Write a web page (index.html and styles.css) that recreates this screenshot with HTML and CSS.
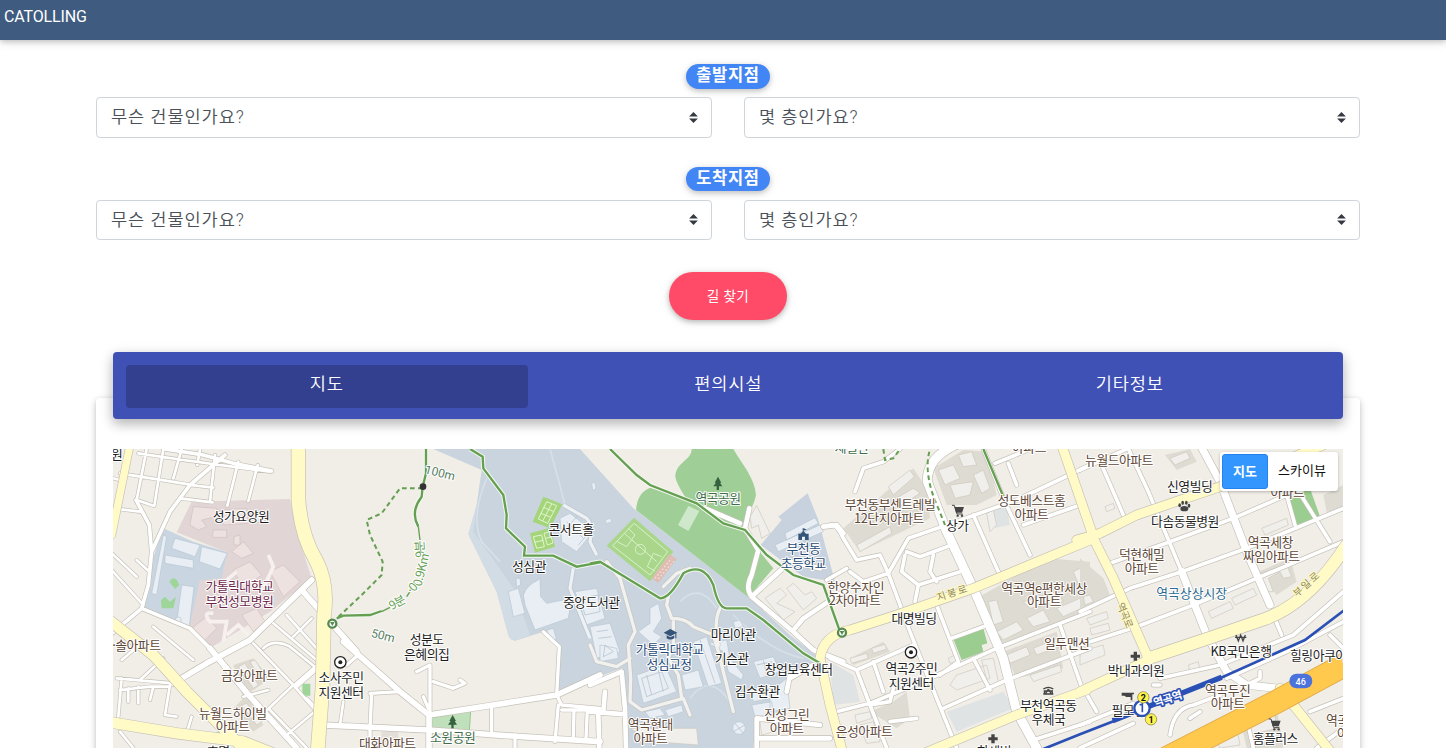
FILE: index.html
```html
<!DOCTYPE html>
<html lang="ko">
<head>
<meta charset="utf-8">
<title>CATOLLING</title>
<link rel="stylesheet" href="styles.css">
</head>
<body>
<header class="topbar">CATOLLING</header>
<main class="container">
  <section class="point">
    <span class="badge">출발지점</span>
    <div class="row">
      <div class="select"><span>무슨 건물인가요?</span><svg class="caret" viewBox="0 0 8 10"><path d="M4 0 8 4H0ZM0 6H8L4 10Z"/></svg></div>
      <div class="select"><span>몇 층인가요?</span><svg class="caret" viewBox="0 0 8 10"><path d="M4 0 8 4H0ZM0 6H8L4 10Z"/></svg></div>
    </div>
  </section>
  <section class="point">
    <span class="badge">도착지점</span>
    <div class="row">
      <div class="select"><span>무슨 건물인가요?</span><svg class="caret" viewBox="0 0 8 10"><path d="M4 0 8 4H0ZM0 6H8L4 10Z"/></svg></div>
      <div class="select"><span>몇 층인가요?</span><svg class="caret" viewBox="0 0 8 10"><path d="M4 0 8 4H0ZM0 6H8L4 10Z"/></svg></div>
    </div>
  </section>
  <button class="find">길 찾기</button>
  <nav class="tabs">
    <a class="tab active">지도</a>
    <a class="tab">편의시설</a>
    <a class="tab">기타정보</a>
  </nav>
  <section class="card">
    <div class="map">
      <svg class="map-svg" viewBox="113 449 1230 299" width="1230" height="299">
        <defs>
          <g id="minor">
            <g transform="translate(110 445) scale(.33333)">
              <path class="w10" d="M110 12 80 165 130 182M160 12 133 182M215 12 190 100M270 12 262 60M315 30 300 170M385 50 352 182M443 60 415 168M85 25 220 45 480 80M30 85 260 122M210 160 308 172M240 120 310 128M10 190 90 200M10 100 40 108M0 320 80 395M80 345 118 380M0 370 100 480"/>
              <path class="w14" d="M345 30 240 120 180 200 125 320 115 420 95 490 0 570M95 490 240 550 300 610M78 165 118 240 125 320M165 12 280 30 370 55 485 78"/>
              <path class="w20" d="M605 405 420 585 290 655 190 715M300 610 420 755 560 909M575 435 740 620M560 720 640 650"/>
              <path class="w10" d="M20 700 190 715M30 735 120 725 180 725M55 730V770M85 725V775M130 725 120 765M35 700 25 815M35 645 100 590M90 705 160 640M130 545 250 645M245 815 230 865M30 860 70 909M180 720 165 810 200 815M460 610Q490 580 540 605L620 670M530 510 620 610M490 535 620 645M430 595 550 720 620 800M550 575 605 520M480 795 590 909M550 720 450 815M620 795 530 870M400 755 475 735M660 840H750M690 840 700 770M440 775 500 840M590 760 620 790"/>
            </g>
            <g transform="translate(350 445) scale(.33333)">
              <path class="w20" d="M-20 590 150 740 237 810V909M237 810 400 785 620 750 750 690M-80 840 237 855 440 870 750 890"/>
              <path class="w12" d="M60 745 150 740M65 745 60 850M240 810V660L200 680M250 710 310 730 345 715 330 705M220 755 235 790M425 780V870M620 750 635 780 750 790M625 780 615 890M580 560 628 605 620 750M672 795 670 880M712 795 708 880M635 795H750M60 850V909M495 870V909M-10 660 25 630"/>
            </g>
            <g transform="translate(590 445) scale(.33333)">
              <path class="w12 campus" d="M50 350 90 400 135 560 115 600 122 700 120 770 155 795 280 760 300 810M235 455 230 480 245 520Q290 520 310 545L370 570 385 620 410 720 430 800M0 600 20 650 80 665 120 640M250 530 250 600 235 640 265 690 275 760M390 490Q370 530 385 600M220 425 260 385 300 370"/>
              <path class="w16" d="M0 720 95 680 105 790 108 909M0 800 105 808M40 800 45 740M25 810 28 909"/>
              <path class="w16" d="M478 190 465 250 505 315 485 390Q465 430 485 455L610 560 670 615 760 650M485 455 600 350 690 370M615 550 640 520 760 440M600 700 670 660M500 820 690 840M500 820V909M500 880H720M590 740 600 690M700 245 740 240 760 265M345 190 450 235"/>
            </g>
            <g transform="translate(830 445) scale(.33333)">
              <path class="w28" d="M400 -10Q290 30 292 110L350 260 430 430 520 640 560 800 620 909"/>
              <path class="w14" d="M75 140 100 70 160 50 210 12M0 240Q20 235 40 280L80 345 150 330 175 385 240 560 280 660 380 909M60 380 100 410 175 385 235 280 350 240 560 165 780 60M50 370 -10 405M230 320 270 335 365 300M225 330 215 380 265 420 255 470M310 330 300 380 320 410M265 420 390 380M430 210 505 380M460 12 520 160 600 330M495 55 600 12M535 55 560 120M580 240 750 180M320 480 385 650M365 580 460 545M80 675 250 600M0 640 80 675 120 780 170 909M0 805 120 775 300 700 500 610 780 500M330 690 385 650M340 790 530 705 780 610M430 640 480 735M690 540 760 740M520 640 555 790M120 780 180 770 190 730M180 830 260 820M560 810 610 885 780 830M130 650 160 740"/>
            </g>
            <g transform="translate(1080 445) scale(.33333)">
              <path class="w22" d="M350 -20 420 110 500 320 570 480M305 380 380 570 440 680 500 720 640 735"/>
              <path class="w14" d="M140 0 205 140 305 380M65 60 130 210M0 75 145 10M0 500 150 430 305 380 500 310 790 190M90 355 270 290 460 220 620 150M0 600 170 545 340 480 530 400 790 290M620 30 650 130 750 290M620 150 645 240M240 700 420 660 640 570 790 440M440 700 620 620 790 530M580 510 605 570M220 720 240 720M10 730 50 800M0 840 160 775M270 870Q280 790 340 780L420 750M0 909 160 835M500 720 540 700 540 680M750 570 790 610M640 740 620 770M500 820 520 909M690 800 790 760M330 820 360 800M710 909 790 850M640 -10 790 -40"/>
            </g>
          </g>
          <g id="major">
            <g transform="translate(110 445) scale(.33333)">
              <path class="w22" d="M60 0 5 270"/>
              <path class="w42" d="M565 0V160Q572 270 620 350 655 420 642 510L638 720 622 930"/>
              <path class="w32" d="M-10 520 130 630 230 740 420 930M-10 830 200 865 400 890 500 930"/>
            </g>
            <g transform="translate(830 445) scale(.33333)">
              <path class="w28" d="M-30 640Q-20 570 60 555L200 510 430 430 780 285M695 0 790 275M-30 640 0 780 40 930M270 930 560 810 770 735"/>
            </g>
            <g transform="translate(1080 445) scale(.33333)">
              <path class="w28" d="M-10 285 60 265 170 210 420 125 730 0M35 270 100 400 205 640M0 740 205 645M600 730 760 930"/>
              <path class="w36" d="M205 640 400 575 560 520Q690 470 800 300"/>
            </g>
          </g>
        </defs>

        <rect x="113" y="449" width="1230" height="299" fill="#f1eee8"/>

        <!-- districts and buildings -->
        <g transform="translate(110 445) scale(.33333)">
          <path fill="#e2d5d5" d="M245 170 540 162 560 260 605 400 480 500 300 610 235 550 270 400 335 390 350 322 200 262Z"/>
          <path fill="#c9d6e1" d="M160 250 250 290 352 322 335 400 270 405 238 550 95 490 125 350Z"/>
          <g class="pink-b"><path d="M250 185 320 190 318 215 275 225 290 245 265 255 240 240Z"/><path d="M310 255H350V277H307ZM330 195 410 190 415 235 340 240ZM415 210 465 200V230L420 235ZM372 275 390 270 390 300 372 300ZM365 320 400 290 430 325 395 340ZM370 375 420 350 455 390 400 430ZM480 380 520 360 570 410 520 455ZM395 510 440 490 465 530 430 560ZM245 550 290 515 320 550 280 590Z"/></g>
          <g class="blue-b"><path d="M195 280 270 300 255 335 185 310ZM275 305 352 325 330 372 268 350ZM160 270 170 275 140 450 125 445ZM165 330 250 345 250 370 165 355ZM215 420 252 425 238 545 200 535Z"/><circle cx="205" cy="525" r="9"/></g>
          <path fill="#9ed69a" d="M178 410Q195 385 208 420L195 432ZM153 465 165 455 180 470 198 455 190 490 155 490ZM577 716H601V752H577ZM315 865Q330 850 350 882L315 875Z"/>
          <path fill="none" stroke="#f6f0ee" stroke-width="11" d="M310 505Q275 500 300 530L350 530 340 590M350 570 385 540 420 575M380 380 310 440M475 330 490 365 455 440"/>
          <path fill="#dedad0" d="M370 660 430 640 480 700 410 750 460 840 430 860 370 790 400 760Z"/><path class="grey-b" d="M385 665 405 655 445 720 430 730ZM420 650 435 645 470 700 455 710ZM395 780 410 775 455 830 440 840Z"/>
        </g>
        <g transform="translate(590 445) scale(.33333)">
          <path fill="#c9d4de" d="M-470 12-325 75-340 180-365 268-280 440-245 570Q-240 585-225 587L-140 560-92 605-95 745 0 705 95 670 110 909H490L500 815 590 800 600 695 690 640 600 570 480 460 130 190-30 12Z"/>
          <path fill="#d2dce5" d="M-325 75-340 180-365 268-280 440-245 570Q-240 585-225 587L-180 570-230 430-300 330-350 260Z"/>
          <path fill="#c7d2de" d="M512 300 575 225 565 215 653 145 685 225 735 410 640 395Z"/>
          <path fill="#9fcf96" d="M305 12H430C455 55 495 100 498 150 490 190 470 205 468 245L505 315 550 370 475 457 138 195C142 155 155 140 180 128L290 162Q255 110 256 90C262 50 305 45 305 12Z"/>
          <path fill="#cfe8cb" d="M295 183 328 198 295 258 264 240Z"/>
          <path fill="none" stroke="#d6e0e8" stroke-width="5" d="M-120 12Q-90 120-75 180M-310 100Q-360 220-325 290L-270 350M270 470Q330 410 380 490M430 510Q540 620 640 640M300 760Q360 680 420 770"/>
          <g class="blue-b">
            <path d="M-200 450Q-190 420-155 405L-150 398-148 455-130 475-55 460-65 520-165 555-195 480ZM-245 440-215 430-195 505-230 515ZM-222 400-210 400-208 420-220 425ZM-90 220-60 205 10 260-40 320-85 290ZM-45 440 20 430 45 520-10 540ZM-130 555-110 550-100 585-120 580ZM0 545 60 535 90 620 20 640ZM180 490 205 475 215 520 190 560 215 575 190 600 145 560 180 535ZM310 590 350 575 395 715 355 725ZM355 595 410 585 420 640 460 690 455 705 415 680 400 620ZM275 690 325 675 340 725 285 735ZM140 690 225 660 260 740 160 775ZM490 650 550 635 570 680 510 700ZM480 735 540 715 545 760 490 770ZM540 740 590 700 600 790 540 800ZM485 780 545 770 550 810 495 815ZM165 800 210 790 225 810 180 820ZM225 795 275 780 280 800 235 815ZM430 530 450 525 460 545 435 550Z"/>
            <path d="M585 265 675 218 685 235 590 285ZM555 300 690 240 700 260 565 320Z"/>
            <circle cx="447" cy="849" r="19"/><path d="M45 225 62 220 65 230 50 236ZM5 115 15 112 18 130 8 137Z"/>
            <path d="M30 600 80 610 85 640 30 650Z"/>
          </g>
          <path fill="none" stroke="#aebbc8" stroke-width="2" d="M-70 230-20 280M-75 255-40 215M-55 270-15 245M-35 300-5 265M-30 460 25 450 30 500-15 510ZM20 560 55 555M25 580 65 575M45 600 70 620 40 635ZM155 700 215 680 235 730 170 755ZM170 690 185 750M205 675 220 740M330 585 375 715M500 660 545 650 555 680M520 645 530 690M490 740 540 730M435 835 460 865M430 860 465 840"/>
          <!-- stadium and courts -->
          <path fill="#a9d68b" d="M132 218 250 320 180 409 50 302Z"/>
          <path fill="#dfbdb4" d="M238 328 260 342 205 414 185 400Z"/>
          <g fill="none" stroke="#d9f1c9" stroke-width="3"><path d="M132 235 233 320 180 390 68 302ZM103 265 200 350M115 250 135 270 110 305 82 290M215 335 190 325 172 365 195 378"/><circle cx="151" cy="313" r="15"/></g>
          <path fill="none" stroke="#f3dfd9" stroke-width="4" stroke-dasharray="5 6" d="M195 400 245 340M205 402 252 348"/>
          <path fill="#a5d57b" d="M-140 155-83 178-120 250-172 230ZM-180 265-118 248-105 305-165 323Z"/>
          <path fill="none" stroke="#e1f4cc" stroke-width="3" d="M-130 170-100 182-127 235-155 222ZM-140 187-108 200M-148 205-117 217M-115 177-142 228M-170 275-145 270-137 305-160 310ZM-138 265-120 260-111 294-128 300ZM-168 292-140 286M-134 280-114 276"/>
          <path fill="none" stroke="#b9c4ce" stroke-width="14" d="M-80 180-10 220Q10 240 0 290L20 330M-50 370-60 430 0 580"/>
          <path fill="none" stroke="#edf1f4" stroke-width="10" d="M-80 180-10 220Q10 240 0 290L20 330M-50 370-60 430 0 580"/>
          <path class="grey-b" d="M480 215 500 182 540 265 515 280 505 240 485 250ZM525 460 570 430 590 450 560 475 615 500 580 525ZM590 430 610 415 645 450 665 440 680 460 640 495ZM510 830 580 820 590 850 515 870ZM120 850 320 850 325 900 190 890Z"/>
        </g>
        <g transform="translate(350 445) scale(.33333)">
          <path fill="#bfe0bb" stroke="#96c795" stroke-width="3" d="M245 818 362 797 358 860 243 855Z"/>
          <path fill="#e3dfd8" d="M95 860 145 855 145 909H90Z"/>
        </g>
        <g transform="translate(830 445) scale(.33333)">
          <path fill="#dedbd2" d="M310 70 400 15 470 20 500 150 440 180 350 180ZM40 250 250 70 290 130 300 220 90 320ZM440 460 650 340 780 350 780 500 500 610ZM520 620 680 560 700 670 560 700ZM60 640 160 590 180 620 70 660ZM120 800 190 770 230 740 240 820 200 850Z"/>
          <path fill="#e0e3e4" d="M475 190 530 180 540 240 490 250ZM350 800 520 740 550 790 380 860ZM0 650 70 690 90 770 10 780Z"/>
          <g class="grey-b"><path d="M325 75 370 60 390 100 345 120ZM385 30 425 20 440 60 400 65ZM430 90 460 75 480 130 455 145ZM360 120 430 110 420 150 375 160ZM175 125 240 75 253 95 190 150ZM190 165 250 130 270 145 215 180ZM80 300 180 245 185 265 90 320ZM470 205 490 195 500 240 480 260ZM475 470 500 465 520 530 490 540ZM500 560 560 530 580 555 520 585ZM590 520 640 495 660 530 610 545ZM680 490 750 460 775 480 700 515ZM580 470 680 440 700 470 600 490ZM730 380 750 370 775 430 755 440ZM530 630 590 605 600 630 540 655ZM610 610 680 580 690 605 620 630ZM600 690 690 660 695 680 610 710ZM360 720 380 690 470 660 480 700 380 735ZM455 645 490 640 505 710 475 725ZM60 640 110 625 115 640 65 655ZM125 610 165 598 170 612 130 625ZM75 810 120 800 125 820 80 835ZM90 840 130 830 135 850 100 860ZM100 870 145 860 150 890 110 895ZM355 640 375 630 380 650 360 655Z"/></g>
          <path fill="#9bcc90" d="M370 582 460 550 472 595 455 600 460 620 395 645Z"/>
        </g>
        <g transform="translate(1080 445) scale(.33333)">
          <path fill="#dedbd2" d="M255 30 330 12 350 50 290 75ZM535 380 630 340 650 410 590 450ZM0 340 70 400 90 450 0 500ZM730 150 790 120V200L740 200ZM480 820 590 790 610 909H500Z"/>
          <g class="grey-b"><path d="M270 40 320 20 330 40 285 60ZM540 385 620 360 635 395 610 400 600 380 565 400 580 440 560 440ZM385 500 450 470 460 490 395 520ZM455 460 520 430 530 450 465 480ZM545 250 620 220 625 240 555 270ZM75 185 100 175 105 190 80 200ZM20 520 80 500 85 520 30 540ZM30 550 85 535 90 555 35 570ZM0 620 70 600 75 630 0 660ZM325 660 355 650 360 675 330 685ZM490 800 580 780 590 850 510 870ZM10 455 30 450 40 470 15 480ZM400 870 470 850 480 900 420 909Z"/></g>
          <path fill="#9bcc90" d="M620 160 690 130 720 215 650 242Z"/>
        </g>

        <use href="#minor" class="casing"/>
        <use href="#minor" class="road"/>
        <use href="#major" class="casing"/>
        <use href="#major" class="avenue"/>

        <!-- highway and railway -->
        <g transform="translate(1080 445) scale(.33333)" fill="none">
          <path stroke="#e0a94a" stroke-width="72" d="M210 965 590 770 830 640"/>
          <path stroke="#ffc94e" stroke-width="67" d="M210 965 590 770 830 640"/>
          <path stroke="#2b50b5" stroke-width="8" d="M-130 920 0 868 110 825 420 700 675 585 800 490"/>
          <path stroke="#2b50b5" stroke-width="16" d="M98 827 425 697"/>
        </g>

        <!-- walking trails -->
        <g class="trail-halo" transform="translate(350 445) scale(.33333)"><path d="M228 0V85L218 125 215 155Q180 200 205 245M360 12 398 35 400 70 460 150 470 210 468 250 525 305 522 332 610 332 680 365 750 352M-40 520-20 512 60 510 95 498M780 12 860 90 900 120 1040 175 1120 235 1185 255 1250 330 1330 390 1420 420 1470 560M720 355 750 350 930 460Q960 460 1000 385 1060 350 1090 420 1105 490 1130 490H1190L1240 525 1360 625 1410 655"/></g>
        <g class="trail" transform="translate(350 445) scale(.33333)"><path d="M228 0V85L218 125 215 155Q180 200 205 245M360 12 398 35 400 70 460 150 470 210 468 250 525 305 522 332 610 332 680 365 750 352M-40 520-20 512 60 510 95 498M780 12 860 90 900 120 1040 175 1120 235 1185 255 1250 330 1330 390 1420 420 1470 560M720 355 750 350 930 460Q960 460 1000 385 1060 350 1090 420 1105 490 1130 490H1190L1240 525 1360 625 1410 655M1900 12 1960 155"/>
          <path stroke-width="6" stroke-dasharray="14 10" d="M218 130 150 130 95 205 50 225 60 270 98 350 95 390 30 455-40 520M1738 20Q1720 90 1765 190L1785 240M1600 12 1605 45 1630 40 1650 12"/>
          <path stroke-width="4" d="M205 245 210 285M95 500 120 487M180 440 170 455"/>
          <circle cx="219" cy="125" r="10" fill="#333" stroke="none"/>
          <g fill="#fff" stroke="#578a50" stroke-width="7"><circle cx="-53" cy="536" r="12"/><circle cx="1476" cy="563" r="12"/></g>
          <path fill="#578a50" stroke="none" d="M-60 531H-46L-53 543ZM1469 558H1483L1476 570Z"/>
        </g>

        <g class="labels" transform="translate(110 445) scale(.33333)">
          <text class="dark" x="20" y="42">원</text><text class="dark" x="393" y="227">성가요양원</text>
          <text class="hosp" x="388" y="438">가톨릭대학교</text><text class="hosp" x="388" y="482">부천성모병원</text>
          <text x="79" y="615">·솔아파트</text><text x="418" y="705">금강아파트</text>
          <text x="368" y="818">뉴월드하이빌</text><text x="368" y="859">아파트</text>
          <text class="dark" x="693" y="712">소사주민</text><text class="dark" x="693" y="756">지원센터</text>
          <text class="dark" x="325" y="932">호명</text>
        </g>
        <g class="labels" transform="translate(350 445) scale(.33333)">
          <text class="dist" x="270" y="96" transform="rotate(14 270 84)">100m</text><text class="dist" x="99" y="584" transform="rotate(14 99 572)">50m</text>
          <text class="walk" transform="translate(222 312) rotate(-94)">9분</text><text class="walk" transform="translate(226 378) rotate(-76)">0.9Km</text><text class="walk" transform="translate(196 438) rotate(-50)">·0</text><text class="walk" transform="translate(147 484) rotate(-28)">9분</text>
          <text class="dark" x="230" y="598">성분도</text><text class="dark" x="230" y="641">은혜의집</text>
          <text class="park" x="308" y="892">소원공원</text><text x="112" y="909">대화아파트</text>
          <text class="dark" x="663" y="268">콘서트홀</text><text class="dark" x="537" y="378">성심관</text><text class="dark" x="724" y="487">중앙도서관</text>
        </g>
        <g class="labels" transform="translate(590 445) scale(.33333)">
          <text class="park" x="384" y="174">역곡공원</text>
          <text class="school" x="640" y="324">부천동</text><text class="school" x="640" y="368">초등학교</text>
          <text class="school" x="239" y="628">가톨릭대학교</text><text class="school" x="237" y="673">성심교정</text>
          <text class="dark" x="430" y="582">마리아관</text><text class="dark" x="425" y="653">기슨관</text>
          <text class="dark" x="626" y="686">창업보육센터</text><text class="dark" x="502" y="753">김수환관</text>
          <text x="590" y="821">진성그린</text><text x="590" y="863">아파트</text>
          <text x="181" y="853">역곡현대</text><text x="181" y="895">아파트</text>
        </g>
        <g class="labels" transform="translate(830 445) scale(.33333)">
          <text class="park" x="65" y="20">제빌란</text><text x="597" y="20">아파트</text>
          <text x="180" y="193">부천동부센트레빌</text><text x="177" y="233">12단지아파트</text>
          <text class="dark" x="382" y="256">상가</text>
          <text x="604" y="180">성도베스트홈</text><text x="604" y="223">아파트</text>
          <text x="77" y="441">한양수자인</text><text x="74" y="481">2차아파트</text>
          <text class="street" x="365" y="455" transform="rotate(-18 365 445)">지 봉 로</text>
          <text class="dark" x="252" y="535">대명빌딩</text>
          <text x="642" y="444">역곡역e편한세상</text><text x="642" y="483">아파트</text>
          <text x="710" y="610">일두맨션</text>
          <text class="dark" x="244" y="684">역곡2주민</text><text class="dark" x="244" y="728">지원센터</text>
          <text class="dark" x="655" y="796">부천역곡동</text><text class="dark" x="655" y="838">우체국</text>
          <text x="102" y="873">은성아파트</text><text class="dark" x="492" y="932">한세빌</text>
        </g>
        <g class="labels" transform="translate(1080 445) scale(.33333)">
          <text x="117" y="60">뉴월드아파트</text><text class="dark" x="329" y="137">신영빌딩</text>
          <text class="dark" x="315" y="242">다솜동물병원</text><text x="622" y="157">아파트</text>
          <text x="571" y="307">역곡세창</text><text x="574" y="347">짜임아파트</text>
          <text x="185" y="341">덕현해밀</text><text x="185" y="384">아파트</text>
          <text class="market" x="335" y="458">역곡상상시장</text>
          <text class="street" x="136" y="522" transform="rotate(68 136 510)">역곡로</text><text class="street" x="677" y="430" transform="rotate(-42 677 418)">부 일 로</text>
          <text class="dark" x="483" y="632">KB국민은행</text><text class="dark" x="715" y="645">힐링아쿠아</text>
          <text class="dark" x="168" y="690">박내과의원</text><text class="dark" x="145" y="811">필모텔</text>
          <text x="443" y="749">역곡두진</text><text x="443" y="788">아파트</text>
          <text class="dark" x="586" y="893">홈플러스</text><text x="772" y="840">역곡</text><text x="788" y="880">아</text>
          <text class="station" x="262" y="773" transform="rotate(-17 262 760)">역곡역</text>
        </g>

        <!-- markers -->
        <g transform="translate(110 445) scale(.33333)"><g id="office"><circle cx="691" cy="652" r="17" fill="#fff" stroke="#222" stroke-width="4"/><circle cx="691" cy="652" r="6" fill="#222"/></g></g>
        <g transform="translate(830 445) scale(.33333)" fill="#444">
          <use href="#office" x="-448" y="-30"/>
          <g id="cart"><path d="M373 186H402L396 203H378Z"/><path fill="none" stroke="#444" stroke-width="3" d="M366 181H373L381 207H398"/><circle cx="383" cy="212" r="3.5"/><circle cx="396" cy="212" r="3.5"/></g>
          <path d="M484 868H494V877H503V886H494V895H484V886H475V877H484Z"/>
          <path fill="none" stroke="#444" stroke-width="4" d="M640 732Q655 722 670 732M641 738H669M640 747H670M645 738 642 747M665 738 668 747M655 732 646 747M655 732 664 747"/>
        </g>
        <g transform="translate(350 445) scale(.33333)" fill="#36623f"><path id="tree" d="M308 810 318 828H314L321 839H311V850H304V839H294L302 828H298Z"/></g>
        <g transform="translate(590 445) scale(.33333)">
          <use href="#tree" x="76" y="-715" fill="#36623f"/>
          <g fill="#34547a"><path d="M625 266H632L640 258 648 266H656V285H645V275H636V285H625ZM638 250H640V262H638ZM640 250 650 253 640 257Z"/><path d="M221 563 241 552 262 563 241 574ZM230 571 241 577 253 571V580Q241 587 230 580ZM256 567V580H259V565Z"/></g>
        </g>
        <g transform="translate(1080 445) scale(.33333)" fill="#444">
          <ellipse cx="313" cy="191" rx="12" ry="8"/><ellipse cx="299" cy="181" rx="4" ry="6"/><ellipse cx="308" cy="173" rx="4" ry="6"/><ellipse cx="319" cy="173" rx="4" ry="6"/><ellipse cx="327" cy="182" rx="4" ry="6"/>
          <path d="M161 620H171V629H180V638H171V647H161V638H152V629H161ZM125 743H162V748H157V766H152V756H139L133 752H125Z"/>
          <path fill="none" stroke="#444" stroke-width="4" d="M468 570 475 588 482 570 489 588 496 570M465 577H499"/>
          <use href="#cart" x="200" y="641"/>
          <rect x="628" y="686" width="69" height="44" rx="22" fill="#4c72dc"/><text class="num" x="662" y="719" fill="#fff">46</text>
          <circle cx="186" cy="790" r="23" fill="#fff" stroke="#2b50b5" stroke-width="7"/><path fill="none" stroke="#2b50b5" stroke-width="5" d="M179 780 187 777V802"/>
          <g fill="#fff34f" stroke="#7a7430" stroke-width="2"><circle cx="190" cy="757" r="17"/><circle cx="213" cy="823" r="17"/></g>
          <text class="exit" x="190" y="767">2</text><text class="exit" x="213" y="833">1</text>
        </g>
      </svg>
      <div class="map-type"><span class="type on">지도</span><span class="type">스카이뷰</span></div>
    </div>
  </section>
</main>
</body>
</html>
```
FILE: styles.css
```css
* { box-sizing: border-box; }
html, body { height: 100%; overflow: hidden; }
body { margin: 0; background: #fff; font-family: Roboto, "Noto Sans CJK KR", sans-serif; font-weight: 300; color: #212529; }
.topbar { position: relative; height: 40px; padding: 7px 4px; background: #3f5c80; color: #fff; font-size: 16px; font-weight: 400; line-height: 19px; letter-spacing: -.15px; box-shadow: 0 2px 5px rgba(0,0,0,.16), 0 2px 10px rgba(0,0,0,.12); }
.container { width: 1296px; height: 708px; margin: 0 0 0 80px; padding: 24px 16px 0; display: flex; flex-direction: column; overflow: hidden; }
.container > * { flex-shrink: 0; }
.point { display: flex; flex-direction: column; align-items: center; height: 102.7px; }
.badge { width: 84px; height: 24.5px; border-radius: 13px; background: #4285f4; color: #fff; font-weight: 700; font-size: 16.5px; line-height: 23px; letter-spacing: .7px; text-align: center; box-shadow: 0 2px 5px rgba(0,0,0,.16), 0 2px 10px rgba(0,0,0,.12); }
.row { display: flex; gap: 32px; width: 100%; margin-top: 8.5px; }
.select { flex: 1; height: 40.5px; display: flex; align-items: center; justify-content: space-between; padding: 0 13px 3px 14px; border: 1px solid #ced4da; border-radius: 4px; color: #495057; font-size: 17.6px; font-weight: 350; letter-spacing: .9px; }
.caret { width: 9px; height: 11px; fill: #343a40; margin-top: 3px; }
.find { align-self: center; width: 118px; height: 48px; margin-top: 3px; padding: 0 0 3px; border: 0; border-radius: 24px; background: #ff4a68; color: #fff; font: 400 13.6px Roboto, "Noto Sans CJK KR", sans-serif; letter-spacing: .4px; box-shadow: 0 2px 5px rgba(0,0,0,.2), 0 2px 10px rgba(0,0,0,.12); }
.tabs { position: relative; z-index: 1; display: flex; margin: 32px 17px 0; height: 66.5px; padding: 13px 12.5px 11px 13px; border-radius: 4px; background: #3f51b5; box-shadow: 0 5px 11px rgba(0,0,0,.18), 0 4px 15px rgba(0,0,0,.15); }
.tab { flex: 1; border-radius: 4px; color: #fff; font-size: 17.6px; font-weight: 350; letter-spacing: .8px; line-height: 39px; text-align: center; }
.tab.active { background: #32408f; }
.card { margin-top: -21px; height: 500px; padding: 51px 17px 0; border-radius: 4px; background: #fff; box-shadow: 0 2px 5px rgba(0,0,0,.16), 0 2px 10px rgba(0,0,0,.12); }
.map { position: relative; height: 299px; overflow: hidden; }
.map-svg { display: block; }
.map-type { position: absolute; top: 3px; right: 5px; display: flex; width: 118px; height: 39px; padding: 2px; background: #fff; border-radius: 3px; box-shadow: 0 1px 3px rgba(0,0,0,.25); font-weight: 400; font-size: 13px; line-height: 33px; text-align: center; letter-spacing: 0; color: #111; }
.type { flex: 1; }
.type.on { flex: 0 0 46px; height: 35px; border: 1px solid #2382ee; border-radius: 3px; background: #3396ff; color: #fff; font-weight: 700; }

/* roads: the casing is the same geometry drawn slightly wider */
#minor path, #major path { fill: none; stroke-linejoin: round; stroke-linecap: round; }
.casing { --edge: 4px; stroke: #c5c1b8; }
.road { --edge: 0px; stroke: #fff; }
.avenue { --edge: 0px; stroke: #fffac6; }
.w10 { stroke-width: calc(8px + var(--edge)); }
.w12 { stroke-width: calc(10px + var(--edge)); }
.w14 { stroke-width: calc(11px + var(--edge)); }
.w16 { stroke-width: calc(14px + var(--edge)); }
.w20 { stroke-width: calc(17px + var(--edge)); }
.w22 { stroke-width: calc(22px + var(--edge)); }
.w28 { stroke-width: calc(27px + var(--edge)); }
.w32 { stroke-width: calc(32px + var(--edge)); }
.w36 { stroke-width: calc(36px + var(--edge)); }
.w42 { stroke-width: calc(41px + var(--edge)); }
.campus { opacity: .75; }
.pink-b { fill: #eee2e1; stroke: #d2bfbf; stroke-width: 2; }
.blue-b { fill: #e8eef3; stroke: #b7c5d1; stroke-width: 2; }
.grey-b { fill: #f1efeb; stroke: #cbc7bd; stroke-width: 2; }
.trail { fill: none; stroke: #65a052; stroke-width: 7; }
.trail-halo { fill: none; stroke: #f5f8f1; stroke-width: 13; }

.labels text { font-family: "Noto Sans CJK KR", sans-serif; font-size: 38.5px; font-weight: 400; letter-spacing: -1.5px; text-anchor: middle; fill: #5d4737; stroke: #fff; stroke-width: 6px; stroke-linejoin: round; paint-order: stroke; }
.labels .dark { fill: #1c1c1c; }
.labels .hosp { fill: #6c1f4a; }
.labels .park { fill: #3f6c4a; }
.labels .school { fill: #284b75; }
.labels .market { fill: #2c6a91; letter-spacing: 0; }
.labels .street { font-size: 30px; fill: #8f875c; stroke: #fffac6; }
.labels .dist { font-family: Roboto, sans-serif; font-size: 36px; letter-spacing: 0; fill: #577e61; }
.labels .walk { font-size: 36px; fill: #65a052; }
.labels .station { font-size: 33px; font-weight: 700; fill: #fff; stroke: #2b50b5; stroke-width: 10px; }
.num { font: 500 27px Roboto, sans-serif; text-anchor: middle; }
.exit { font: 700 27px Roboto, sans-serif; text-anchor: middle; fill: #111; }
```
